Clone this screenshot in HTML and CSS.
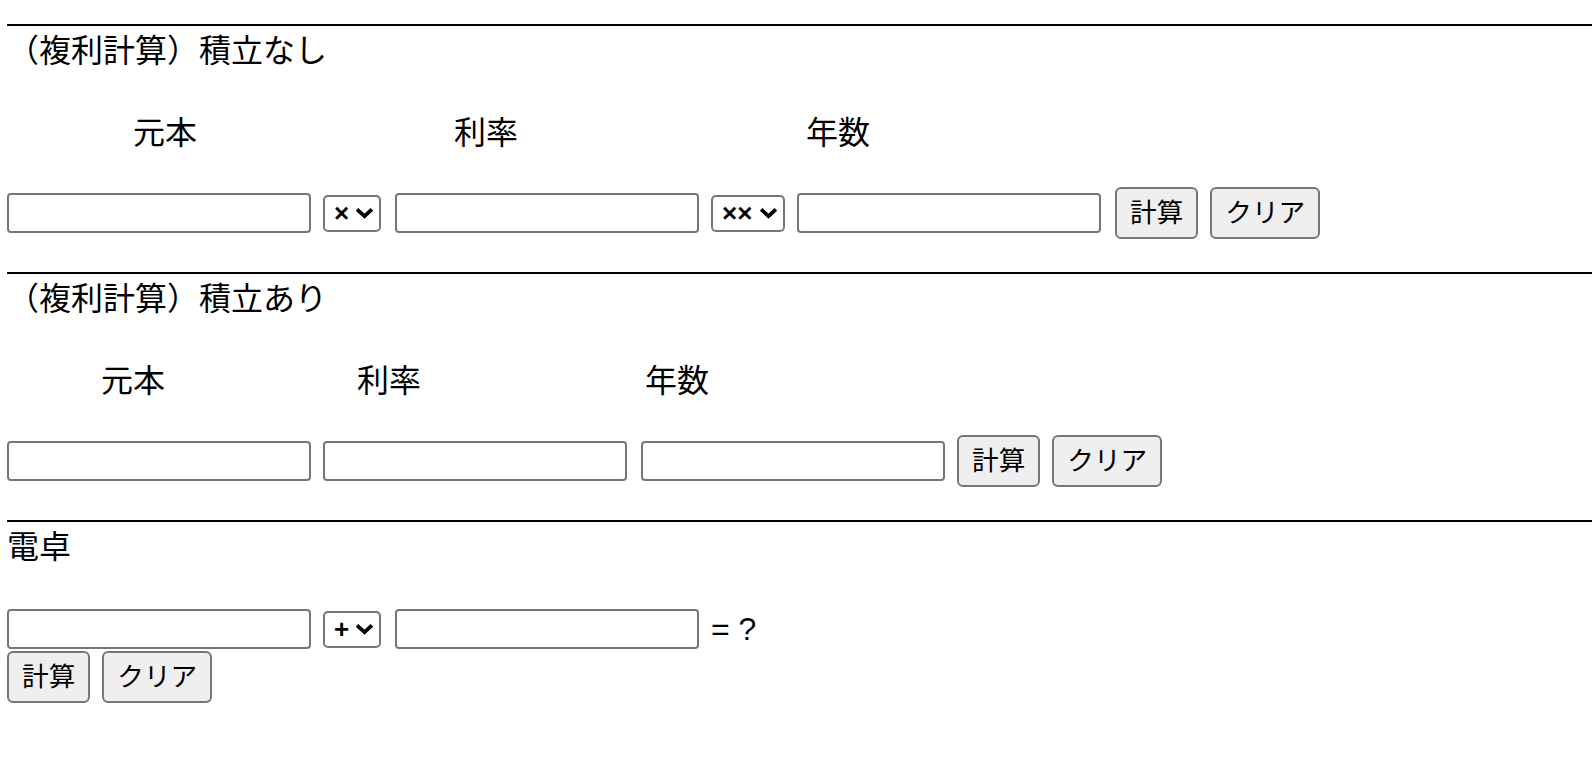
FILE: index.html
```html
<!DOCTYPE html>
<html lang="ja">
<head>
  <meta charset="UTF-8">
  <meta name="viewport" content="width=device-width, initial-scale=1.0">
  <title>複利計算</title>
  <link rel="stylesheet" href="styles.css">
</head>
<body>
  <section class="calc">
    <hr>
    <div class="title">（複利計算）積立なし</div>
    <div class="labels">
      <span class="label nashi-principal">元本</span>
      <span class="label nashi-rate">利率</span>
      <span class="label nashi-years">年数</span>
    </div>
    <div class="row">
      <input class="field" type="text" id="nashiPrincipal">
      <div class="select-wrap">
        <select class="op"><option>×</option></select>
        <svg class="chevron" viewBox="0 0 18 11"><polyline points="2,2 9,8.5 16,2"/></svg>
      </div>
      <input class="field gap-wide" type="text" id="nashiRate">
      <div class="select-wrap">
        <select class="op op-wide"><option>××</option></select>
        <svg class="chevron" viewBox="0 0 18 11"><polyline points="2,2 9,8.5 16,2"/></svg>
      </div>
      <input class="field" type="text" id="nashiYears">
      <button class="btn gap-wide">計算</button>
      <button class="btn">クリア</button>
    </div>
  </section>

  <section class="calc">
    <hr>
    <div class="title">（複利計算）積立あり</div>
    <div class="labels">
      <span class="label ari-principal">元本</span>
      <span class="label ari-rate">利率</span>
      <span class="label ari-years">年数</span>
    </div>
    <div class="row">
      <input class="field" type="text" id="ariPrincipal">
      <input class="field" type="text" id="ariRate">
      <input class="field gap-wide" type="text" id="ariYears">
      <button class="btn">計算</button>
      <button class="btn">クリア</button>
    </div>
  </section>

  <section class="calc">
    <hr>
    <div class="title">電卓</div>
    <div class="calc-row">
      <input class="field" type="text" id="left">
      <div class="select-wrap">
        <select class="op"><option>+</option></select>
        <svg class="chevron" viewBox="0 0 18 11"><polyline points="2,2 9,8.5 16,2"/></svg>
      </div>
      <input class="field gap-wide" type="text" id="right">
      <span class="result">= ?</span>
    </div>
    <div class="btn-row">
      <button class="btn">計算</button>
      <button class="btn">クリア</button>
    </div>
  </section>
</body>
</html>
```

FILE: styles.css
```css
body {
  margin: 0;
  padding: 24px 0 0 7px;
  font-family: "Noto Sans CJK JP", sans-serif;
  font-size: 32px;
  color: #000;
  background: #fff;
}
hr {
  margin: 0;
  border: 0;
  border-top: 2px solid #000;
}
.title {
  line-height: 44px;
}
.labels {
  display: flex;
  margin-top: 38px;
  line-height: 44px;
}
.nashi-principal { margin-left: 126px; }
.nashi-rate { margin-left: 257px; }
.nashi-years { margin-left: 288px; }
.ari-principal { margin-left: 94px; }
.ari-rate { margin-left: 192px; }
.ari-years { margin-left: 224px; }
.row {
  display: flex;
  align-items: center;
  gap: 12px;
  height: 52px;
  margin: 35px 0 33px;
}
.gap-wide {
  margin-left: 2px;
}
.field {
  box-sizing: border-box;
  width: 304px;
  height: 40px;
  border: 2px solid #767676;
  border-radius: 4px;
  padding: 2px 4px;
  font-size: 26px;
  background: #fff;
}
.select-wrap {
  position: relative;
  display: flex;
}
.op {
  -webkit-appearance: none;
  appearance: none;
  box-sizing: border-box;
  width: 58px;
  height: 37px;
  border: 2px solid #767676;
  border-radius: 5px;
  padding: 0 0 0 9px;
  background: #fff;
  color: #000;
  font: 700 26px "Liberation Sans", Arial, sans-serif;
}
.op-wide {
  width: 74px;
}
.chevron {
  position: absolute;
  right: 7px;
  top: 12px;
  width: 19px;
  height: 12px;
  pointer-events: none;
}
.chevron polyline {
  fill: none;
  stroke: #000;
  stroke-width: 3.5;
}
.btn {
  box-sizing: border-box;
  height: 52px;
  border: 2px solid #767676;
  border-radius: 6px;
  padding: 0 13px 5px;
  background: #efefef;
  color: #000;
  font-family: "Noto Sans CJK JP", sans-serif;
  font-size: 26.67px;
  line-height: 40px;
  cursor: pointer;
}
.calc-row {
  display: flex;
  align-items: center;
  gap: 12px;
  height: 42px;
  margin-top: 42px;
}
.result {
  font-family: "Liberation Sans", Arial, sans-serif;
  font-size: 32px;
  line-height: 40px;
}
.btn-row {
  display: flex;
  gap: 12px;
  margin-top: 1px;
}
```
